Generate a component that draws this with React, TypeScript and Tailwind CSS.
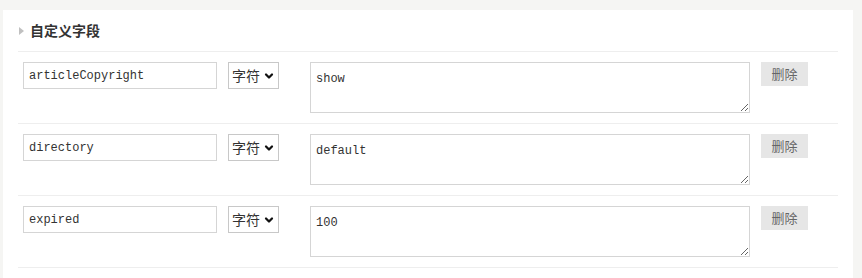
import { ChevronDown } from 'lucide-react'

const FIELDS = [
  { name: 'articleCopyright', value: 'show' },
  { name: 'directory', value: 'default' },
  { name: 'expired', value: '100' },
]

const CJK = "font-['Noto_Sans_CJK_SC','Noto_Sans',sans-serif]"
const MONO = "font-['Liberation_Mono','DejaVu_Sans_Mono',monospace]"

function FieldRow({ name, value }: { name: string; value: string }) {
  return (
    <div className="flex items-start border-t border-[#eeeeee] px-[5px] pt-[10px] pb-[10px]">
      <input
        readOnly
        defaultValue={name}
        className={`h-[27px] w-[194px] border border-[#d5d5d5] bg-white px-[5px] text-[12px] text-[#333] outline-none ${MONO}`}
      />

      {/* type select */}
      <div
        className={`ml-[11px] flex h-[27px] w-[51px] items-center gap-[3px] border border-[#c8c8c8] bg-white pl-[3px] text-[14px] text-[#333] ${CJK}`}
      >
        <span>字符</span>
        <ChevronDown size={12} strokeWidth={4.5} className="text-[#111]" />
      </div>

      <textarea
        readOnly
        defaultValue={value}
        className={`ml-[31px] h-[51px] w-[440px] border border-[#d5d5d5] bg-white px-[5px] pt-[7px] text-[12px] text-[#333] outline-none ${MONO}`}
      />

      <button
        className={`ml-[11px] h-[24px] w-[47px] bg-[#e6e6e6] text-[13px] text-[#666] ${CJK}`}
      >
        删除
      </button>
    </div>
  )
}

export default function App() {
  return (
    <div className="h-[278px] w-[862px] overflow-hidden bg-[#f5f5f3] pt-[10px] pl-[3px]">
      <div className="h-[300px] w-[850px] bg-white px-[15px]">
        {/* Header */}
        <div className="flex h-[41px] items-center gap-[6px] pl-[1px]">
          <svg width="5" height="8" viewBox="0 0 5 8" className="mt-[1px]">
            <path d="M0 0 L5 4 L0 8 Z" fill="#c0c0c0" />
          </svg>
          <span className={`text-[14px] font-bold text-[#333] ${CJK}`}>自定义字段</span>
        </div>

        {FIELDS.map((f) => (
          <FieldRow key={f.name} name={f.name} value={f.value} />
        ))}
        <div className="border-t border-[#eeeeee]" />
      </div>
    </div>
  )
}
